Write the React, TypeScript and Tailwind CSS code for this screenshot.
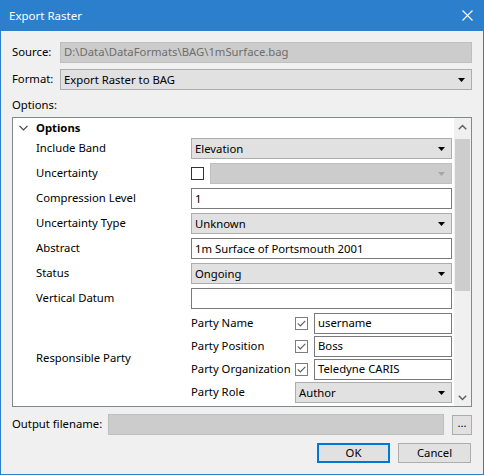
import React from "react";

const FONT = "font-['Segoe_UI','Noto_Sans',sans-serif] text-[11.3px]";

function Arrow({ disabled = false }: { disabled?: boolean }) {
  return (
    <svg width="7" height="4" viewBox="0 0 7 4" className="shrink-0">
      <path d="M0 0H7L3.5 4Z" fill={disabled ? "#a6a6a6" : "#000"} />
    </svg>
  );
}

function Combo({ value, className = "" }: { value: string; className?: string }) {
  return (
    <div
      className={`h-[21px] flex items-center justify-between bg-[#e1e1e1] border border-[#adadad] pl-[3px] pr-[6px] ${className}`}
    >
      <span className="leading-none">{value}</span>
      <Arrow />
    </div>
  );
}

function TextBox({ value = "", className = "" }: { value?: string; className?: string }) {
  return (
    <div
      className={`h-[21px] flex items-center bg-white border border-[#7a7a7a] pl-[3px] ${className}`}
    >
      <span className="leading-none">{value}</span>
    </div>
  );
}

function Check({ checked = false }: { checked?: boolean }) {
  return (
    <div
      className={`w-[13px] h-[13px] shrink-0 bg-white border flex items-center justify-center ${
        checked ? "border-[#7d7d7d]" : "border-[#333333]"
      }`}
    >
      {checked && (
        <svg width="9" height="7" viewBox="0 0 9 7">
          <path d="M0.7 3.4L3.3 6L8.3 0.8" fill="none" stroke="#5c5c5c" strokeWidth="1.1" />
        </svg>
      )}
    </div>
  );
}

function Row({ label, children }: { label: string; children: React.ReactNode }) {
  return (
    <div className="flex items-center h-[21px]">
      <div className="w-[178px] pl-[23px] whitespace-nowrap">{label}</div>
      <div className="w-[261px]">{children}</div>
    </div>
  );
}

function PartyRow({ label, value }: { label: string; value: string }) {
  return (
    <div className="flex items-center h-[20px]">
      <div className="w-[104px] whitespace-nowrap">{label}</div>
      <Check checked />
      <TextBox value={value} className="ml-[6px] w-[138px] h-[20px]" />
    </div>
  );
}

export default function App() {
  return (
    <div
      className={`w-[484px] h-[475px] bg-[#f0f0f0] border-x border-b border-[#2b7fcd] flex flex-col text-black ${FONT}`}
    >
      {/* title bar */}
      <div className="h-[31px] -mx-px bg-[#2b7fcd] flex items-center justify-between pl-[9px] pr-[11px] text-white text-[11.5px]">
        <span>Export Raster</span>
        <svg width="11" height="11" viewBox="0 0 11 11">
          <path d="M0.5 0.5L10.5 10.5M10.5 0.5L0.5 10.5" stroke="#fff" strokeWidth="1.1" />
        </svg>
      </div>

      <div className="flex flex-col pl-[11px] pr-[11px]">
        <div className="flex items-center mt-[11px] h-[21px]">
          <div className="w-[48px]">Source:</div>
          <div className="flex-1 h-[21px] bg-[#cccccc] border border-[#bfbfbf] flex items-center pl-[3px] text-[#6d6d6d]">
            D:\Data\DataFormats\BAG\1mSurface.bag
          </div>
        </div>

        <div className="flex items-center mt-[6px] h-[21px]">
          <div className="w-[48px]">Format:</div>
          <Combo value="Export Raster to BAG" className="flex-1" />
        </div>

        <div className="mt-[6px] h-[17px] leading-[17px]">Options:</div>

        <div className="mt-[4px] h-[290px] bg-white border border-[#828790] flex overflow-hidden">
          <div className="flex-1 flex flex-col">
            <div className="flex items-center h-[20px]">
              <svg width="9" height="6" viewBox="0 0 9 6" className="ml-[6px]">
                <path d="M0.5 0.8L4.5 4.8L8.5 0.8" fill="none" stroke="#404040" strokeWidth="1.2" />
              </svg>
              <span className="ml-[8px] font-bold">Options</span>
            </div>
            <div className="flex flex-col gap-[4px]">
              <Row label="Include Band">
                <Combo value="Elevation" />
              </Row>
              <Row label="Uncertainty">
                <div className="flex items-center">
                  <Check />
                  <div className="ml-[6px] flex-1 h-[21px] bg-[#cccccc] border border-[#bfbfbf] flex items-center justify-end pr-[6px]">
                    <Arrow disabled />
                  </div>
                </div>
              </Row>
              <Row label="Compression Level">
                <TextBox value="1" />
              </Row>
              <Row label="Uncertainty Type">
                <Combo value="Unknown" />
              </Row>
              <Row label="Abstract">
                <TextBox value="1m Surface of Portsmouth 2001" />
              </Row>
              <Row label="Status">
                <Combo value="Ongoing" />
              </Row>
              <Row label="Vertical Datum">
                <TextBox />
              </Row>
            </div>
            <div className="flex items-center mt-[4px]">
              <div className="w-[178px] pl-[23px] whitespace-nowrap">Responsible Party</div>
              <div className="flex flex-col gap-[3px]">
                <PartyRow label="Party Name" value="username" />
                <PartyRow label="Party Position" value="Boss" />
                <PartyRow label="Party Organization" value="Teledyne CARIS" />
                <div className="flex items-center h-[21px]">
                  <div className="w-[104px]">Party Role</div>
                  <Combo value="Author" className="w-[157px]" />
                </div>
              </div>
            </div>
          </div>
          {/* scrollbar */}
          <div className="w-[17px] ml-[2px] bg-[#f0f0f0] flex flex-col items-center">
            <div className="h-[17px] flex items-center justify-center">
              <svg width="9" height="6" viewBox="0 0 9 6">
                <path d="M0.8 5.2L4.5 1.5L8.2 5.2" fill="none" stroke="#606060" strokeWidth="1.5" />
              </svg>
            </div>
            <div className="w-[15px] h-[152px] mt-[4px] bg-[#cdcdcd]" />
            <div className="flex-1" />
            <div className="h-[17px] flex items-center justify-center">
              <svg width="9" height="6" viewBox="0 0 9 6">
                <path d="M0.8 0.8L4.5 4.5L8.2 0.8" fill="none" stroke="#606060" strokeWidth="1.5" />
              </svg>
            </div>
          </div>
        </div>

        <div className="flex items-center mt-[7px] h-[21px]">
          <div className="w-[96px]">Output filename:</div>
          <div className="w-[336px] h-[21px] bg-[#cccccc] border border-[#bfbfbf]" />
          <div className="ml-[8px] w-[20px] h-[20px] bg-[#e1e1e1] border border-[#adadad] flex items-center justify-center leading-none pb-[4px]">
            ...
          </div>
        </div>

        <div className="flex justify-end gap-[8px] mt-[8px] pr-px">
          <div className="w-[73px] h-[20px] bg-[#e1e1e1] border-2 border-[#0078d7] flex items-center justify-center">
            OK
          </div>
          <div className="w-[73px] h-[20px] bg-[#e1e1e1] border border-[#adadad] flex items-center justify-center">
            Cancel
          </div>
        </div>
      </div>
    </div>
  );
}
